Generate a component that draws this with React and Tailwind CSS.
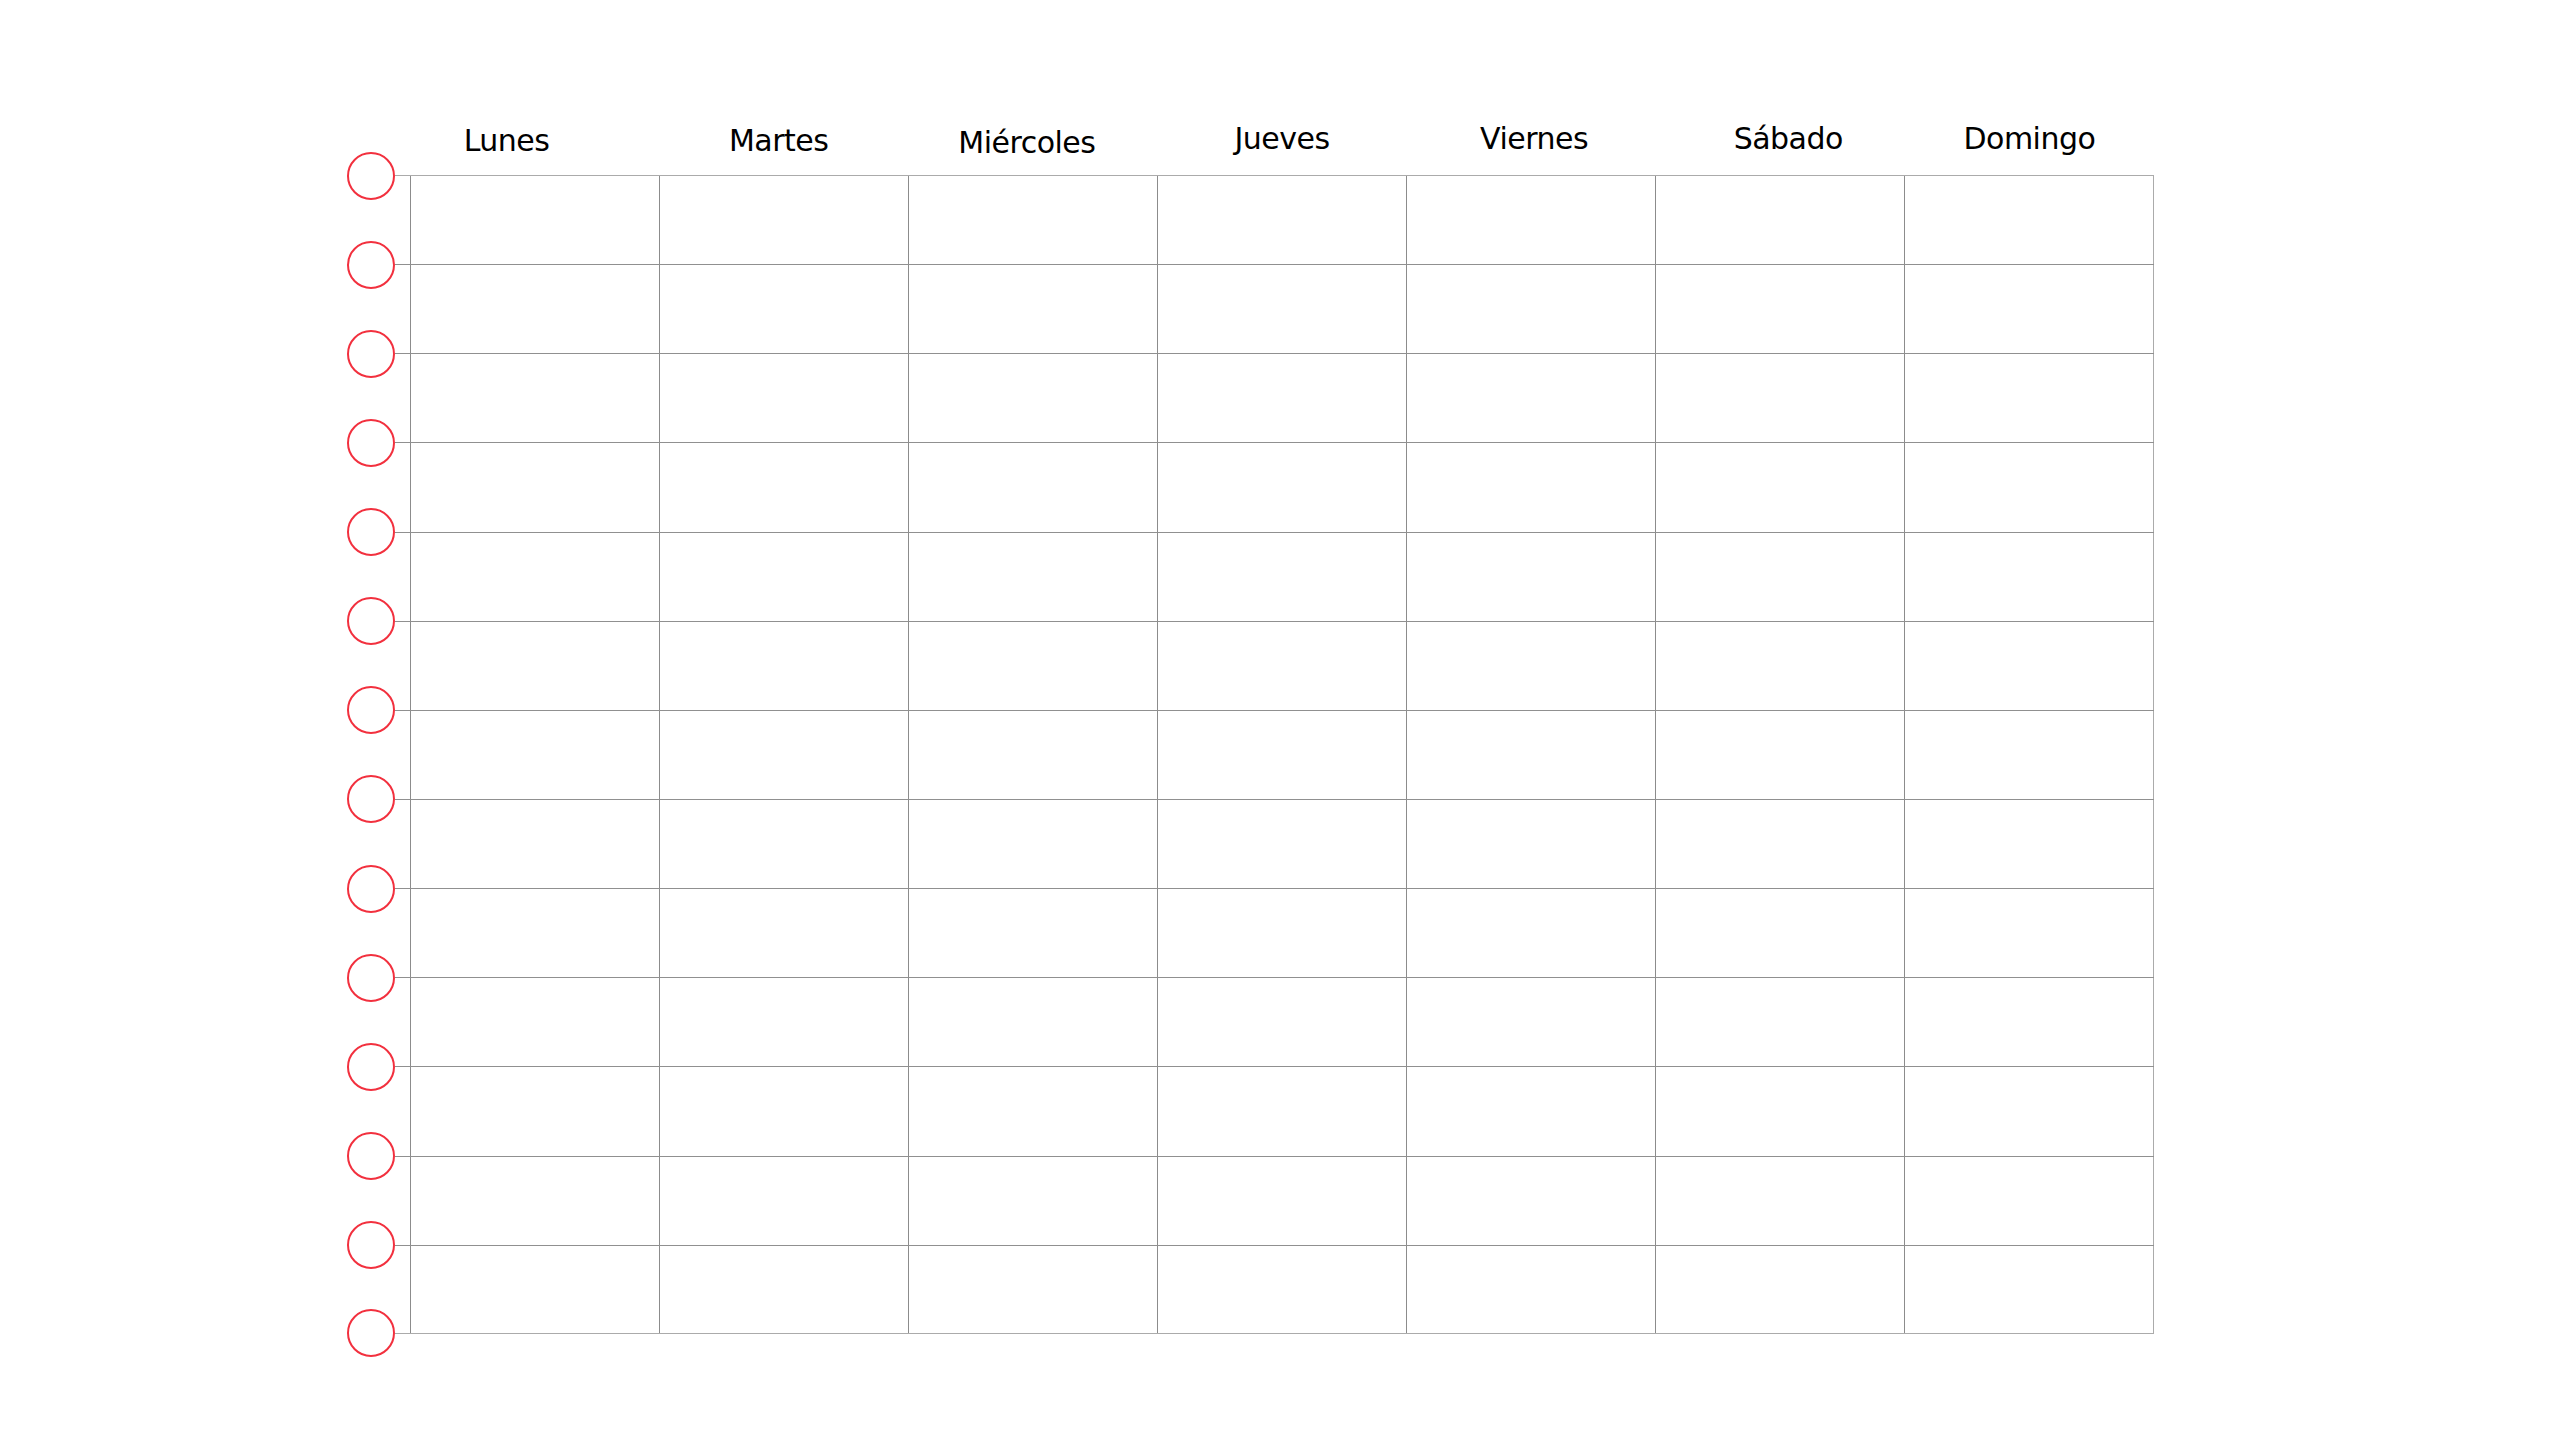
// Weekly planner sheet
const DAYS = [
  { name: "Lunes", cls: "pr-[56px]" },
  { name: "Martes", cls: "pr-[10px]" },
  { name: "Miércoles", cls: "pt-[2px] pr-[12px]" },
  { name: "Jueves", cls: "-mt-[2px]" },
  { name: "Viernes", cls: "-mt-[2px] pl-[6px]" },
  { name: "Sábado", cls: "-mt-[2px] pl-[16px]" },
  { name: "Domingo", cls: "-mt-[2px]" },
];

const ROWS = 13;

function Hole({ className = "" }) {
  return (
    <div
      className={`absolute -left-[48px] w-12 h-12 rounded-full border-2 border-[#f2303e] bg-white ${className}`}
    />
  );
}

export default function App() {
  return (
    <div className="min-h-screen w-full bg-white font-['DejaVu_Sans','Liberation_Sans',sans-serif] text-black">
      <div className="pl-[395px] pt-[126px]">
        {/* Header */}
        <div className="ml-[15px] grid w-[1744px] grid-cols-7 h-[49px]">
          {DAYS.map((d) => (
            <div
              key={d.name}
              className={`text-center text-[30px] leading-[30px] tracking-[-0.5px] ${d.cls}`}
            >
              {d.name}
            </div>
          ))}
        </div>

        {/* Grid */}
        <div className="w-[1759px]">
          {Array.from({ length: ROWS }, (_, r) => (
            <div
              key={r}
              className={`relative flex h-[89.15px] border-t border-[#909090] ${
                r === 0 ? "border-t-[#ababab]" : ""
              } ${r === ROWS - 1 ? "border-b border-b-[#ababab]" : ""}`}
            >
              <Hole className="-top-[24.5px]" />
              {r === ROWS - 1 && <Hole className="-bottom-[24.5px]" />}
              <div className="w-[15px] shrink-0" />
              {DAYS.map((d, i) => (
                <div
                  key={d.name}
                  className={`flex-1 border-l border-[#8c8c8c] ${
                    i === DAYS.length - 1 ? "border-r border-r-[#ababab]" : ""
                  }`}
                />
              ))}
            </div>
          ))}
        </div>
      </div>
    </div>
  );
}
